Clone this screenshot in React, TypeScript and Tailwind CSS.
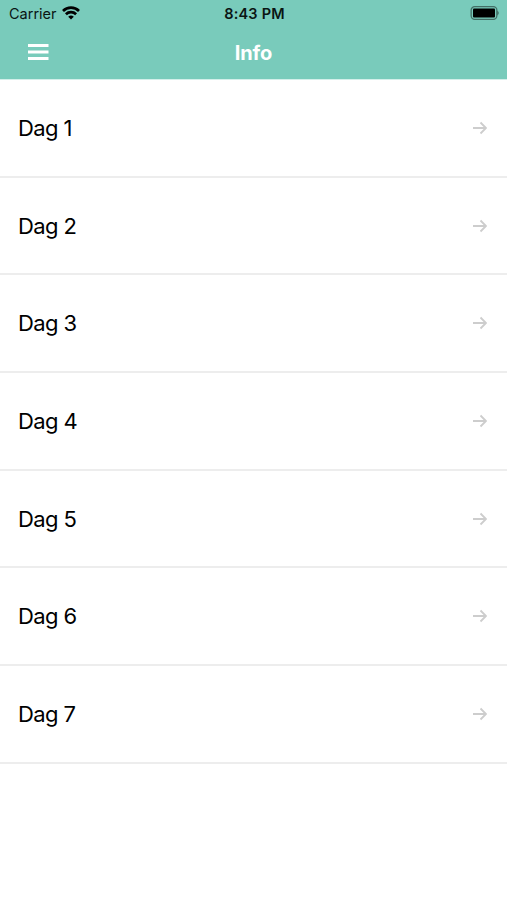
const DAYS = [1, 2, 3, 4, 5, 6, 7];

function StatusBar() {
  return (
    <div className="grid grid-cols-3 items-center h-[27px] pl-[9px] pr-[7px] text-[#0a1513]">
      <div className="flex items-center gap-[5px]">
        <span className="pt-px text-[14.5px] leading-none">Carrier</span>
        <svg className="mb-[2px]" width="18" height="14" viewBox="0 0 18 14" fill="none" stroke="#000" strokeWidth="2.7">
          <path d="M1 5a11.4 11.4 0 0 1 16 0" />
          <path d="M3.9 8.3a7.3 7.3 0 0 1 10.2 0" />
          <path d="M9 13.6l-2.8-2.8a4.2 4.2 0 0 1 5.6 0z" fill="#000" stroke="none" />
        </svg>
      </div>
      <span className="pt-px text-center text-[14.5px] leading-none font-semibold tracking-[0.2px]">8:43 PM</span>
      <svg className="justify-self-end mb-px" width="30" height="14" viewBox="0 0 30 14">
        <rect x="1.15" y="0.65" width="25.7" height="12.7" rx="3.5" fill="none" stroke="#000" strokeOpacity="0.45" strokeWidth="1.3" />
        <rect x="3" y="2.6" width="22" height="8.8" rx="1" />
        <path d="M27.5 4.8v4.4a2.6 2.6 0 0 0 0-4.4z" fillOpacity="0.5" />
      </svg>
    </div>
  );
}

function NavBar() {
  return (
    <div className="grid grid-cols-3 items-center h-[52px] pb-[2px] px-[28px] text-white">
      <button aria-label="Menu" className="w-[21px]">
        <svg width="21" height="16" viewBox="0 0 21 16" fill="currentColor">
          <path d="M0 0h20.5v3H0zM0 6.5h20.5v3H0zM0 13h20.5v3H0z" />
        </svg>
      </button>
      <h1 className="pt-px text-center text-[20px] leading-none font-bold tracking-[-0.1px]">Info</h1>
    </div>
  );
}

function DayRow({ day }: { day: number }) {
  return (
    <li className="flex items-center justify-between h-[97.7px] pl-[18px] pr-[20px] border-b-2 border-[#ededed]">
      <span className="text-[22px] leading-none tracking-[-0.6px]">Dag {day}</span>
      <svg width="14" height="14" viewBox="0 0 14 14" fill="none" stroke="#cdcdcd" strokeWidth="1.8">
        <path d="M0 7h13M7.5 1.5L13 7l-5.5 5.5" />
      </svg>
    </li>
  );
}

export default function App() {
  return (
    <div className="min-h-screen bg-white font-['Inter',sans-serif] text-black">
      <header className="bg-[#79cbbb] border-b border-[#d3efea]">
        <StatusBar />
        <NavBar />
      </header>
      <ul>
        {DAYS.map((day) => (
          <DayRow key={day} day={day} />
        ))}
      </ul>
    </div>
  );
}
